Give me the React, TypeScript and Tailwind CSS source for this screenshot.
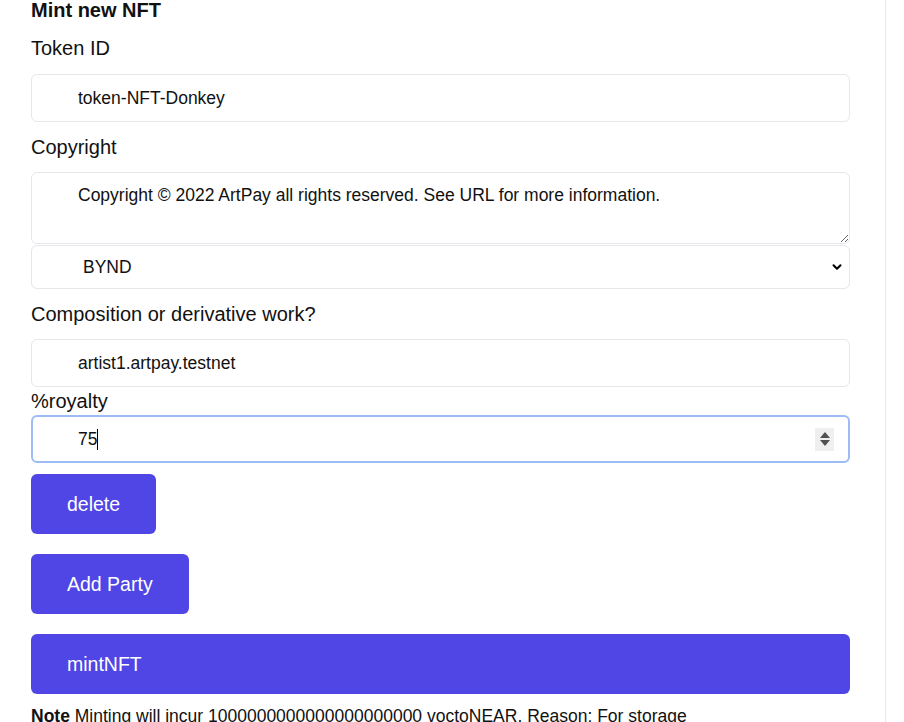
import { ChevronDown } from 'lucide-react';

const font = { fontFamily: '"Liberation Sans", Arial, sans-serif' };

function Label({ children, className = '' }: { children: React.ReactNode; className?: string }) {
    return <label className={`block text-[20px] leading-7 text-[#111] ${className}`}>{children}</label>;
}

function TextField({ value, className = '' }: { value: string; className?: string }) {
    return (
        <input
            readOnly
            value={value}
            className={`block w-full h-12 rounded-md border border-gray-200 bg-white pl-[46px] pr-4 text-[17.5px] text-[#111] outline-none ${className}`}
        />
    );
}

export default function App() {
    return (
        <div style={font} className="min-h-[722px] bg-white">
            <div className="w-[886px] min-h-[722px] border-r border-gray-200 pl-[31px] pr-[35px]">
                <h2 className="text-[20px] leading-5 font-bold text-[#111] mb-[14px]">Mint new NFT</h2>

                <Label className="mb-3">Token ID</Label>
                <TextField value="token-NFT-Donkey" className="mb-[11px]" />

                <Label className="mb-[11px]">Copyright</Label>
                <textarea
                    readOnly
                    value="Copyright © 2022 ArtPay all rights reserved. See URL for more information."
                    className="block w-full h-[72px] rounded-md border border-gray-200 bg-white pl-[46px] pr-4 pt-[10px] text-[17.5px] leading-6 text-[#111] outline-none"
                />
                <div className="relative mt-[1px] mb-[11px]">
                    <select
                        defaultValue="BYND"
                        className="block w-full h-[44px] appearance-none rounded-md border border-gray-200 bg-white pl-[51px] pr-8 text-[17.5px] text-[#111] outline-none"
                    >
                        <option value="BYND">BYND</option>
                    </select>
                    <ChevronDown className="pointer-events-none absolute right-[6px] top-1/2 -translate-y-1/2 w-[14px] h-[14px] text-black" strokeWidth={3.5} />
                </div>

                <Label className="mb-[11px]">Composition or derivative work?</Label>
                <TextField value="artist1.artpay.testnet" />

                <Label>%royalty</Label>
                <div className="flex items-center h-12 rounded-md border-2 border-[#9dbcf5] bg-white pl-[45px] pr-[14px] mb-[11px] text-[17.5px] text-[#111]">
                    <span>75</span>
                    <span className="inline-block w-px h-[21px] bg-black" />
                    <span className="ml-auto flex flex-col items-center justify-center gap-[2px] w-[19px] h-[23px] bg-[#efefef]">
                        <span className="block w-0 h-0 border-l-[5px] border-r-[5px] border-b-[6px] border-l-transparent border-r-transparent border-b-[#505050]" />
                        <span className="block w-0 h-0 border-l-[5px] border-r-[5px] border-t-[6px] border-l-transparent border-r-transparent border-t-[#505050]" />
                    </span>
                </div>

                <div className="flex flex-col items-start gap-5">
                    <button className="rounded-md bg-[#4f46e5] px-9 py-4 text-[19.5px] leading-7 text-white">delete</button>
                    <button className="rounded-md bg-[#4f46e5] px-9 py-4 text-[19.5px] leading-7 text-white">Add Party</button>
                    <button className="w-full text-left rounded-md bg-[#4f46e5] px-9 py-4 text-[19.5px] leading-7 text-white">mintNFT</button>
                </div>

                <p className="mt-2 text-[17.5px] leading-7 text-[#111]">
                    <span className="font-bold">Note</span> Minting will incur 1000000000000000000000 voctoNEAR. Reason: For storage
                </p>
            </div>
        </div>
    );
}
